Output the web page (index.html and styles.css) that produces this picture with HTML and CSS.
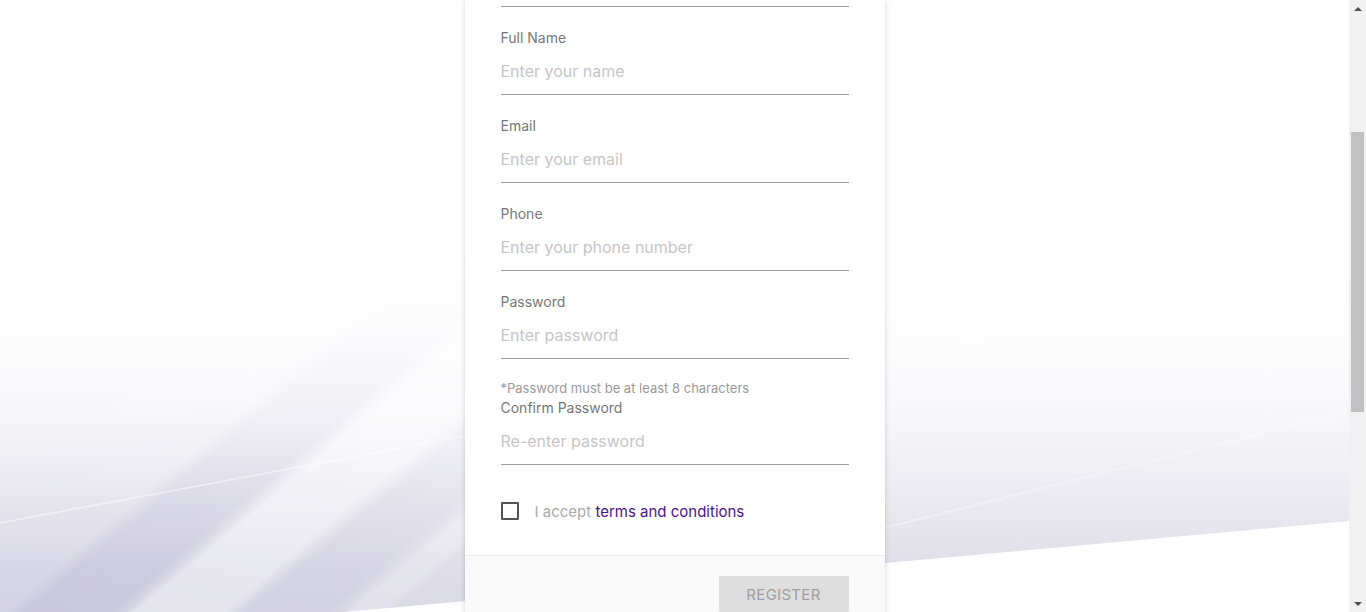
FILE: index.html
```html
<!DOCTYPE html>
<html lang="en">
<head>
<meta charset="utf-8">
<title>Register</title>
<link rel="stylesheet" href="styles.css">
</head>
<body>
<div class="screen">
  <main class="stage">
    <form class="card" action="#" onsubmit="return false">
      <div class="card-body">
        <div class="field-prev" aria-hidden="true"></div>
        <div class="field">
          <label class="field-label" for="fullname">Full Name</label>
          <input class="field-input" id="fullname" type="text" placeholder="Enter your name">
        </div>
        <div class="field">
          <label class="field-label" for="email">Email</label>
          <input class="field-input" id="email" type="email" placeholder="Enter your email">
        </div>
        <div class="field">
          <label class="field-label" for="phone">Phone</label>
          <input class="field-input" id="phone" type="tel" placeholder="Enter your phone number">
        </div>
        <div class="field">
          <label class="field-label" for="password">Password</label>
          <input class="field-input" id="password" type="password" placeholder="Enter password">
        </div>
        <p class="field-hint">*Password must be at least 8 characters</p>
        <div class="field field-after-hint">
          <label class="field-label" for="confirm">Confirm Password</label>
          <input class="field-input" id="confirm" type="password" placeholder="Re-enter password">
        </div>
        <label class="terms">
          <input class="terms-box" type="checkbox">
          <span class="terms-text">I accept <a class="terms-link" href="#">terms and conditions</a></span>
        </label>
      </div>
      <footer class="card-foot">
        <button class="btn-register" type="submit" disabled>Register</button>
      </footer>
    </form>
  </main>
  <div class="scrollbar" aria-hidden="true">
    <span class="sb-arrow sb-up"></span>
    <div class="sb-track"><span class="sb-thumb"></span></div>
    <span class="sb-arrow sb-down"></span>
  </div>
</div>
</body>
</html>
```

FILE: styles.css
```css
* { box-sizing: border-box; }

html, body { height: 100%; }

body {
  margin: 0;
  font-family: "Inter", "Liberation Sans", sans-serif;
  color: #757575;
  background: #fff;
  overflow: hidden;
}

.screen {
  display: flex;
  height: 612px;
  overflow: hidden;
}

/* page area with the wave picture behind the card */
.stage {
  flex: 1;
  display: flex;
  justify-content: center;
  align-items: flex-start;
  overflow: hidden;
  background-color: #fff;
  background-repeat: no-repeat;
  background-size: 100% 100%;
  background-image:
    /* white area under the slanted lower edge of the picture */
    linear-gradient(174.83deg, rgba(255,255,255,0) 640px, #fff 641px),
    /* thin light streaks */
    linear-gradient(169.41deg, rgba(255,255,255,0) 512.5px, rgba(255,255,255,0.55) 514px, rgba(255,255,255,0) 515.5px),
    linear-gradient(165.96deg, rgba(255,255,255,0) 725px, rgba(255,255,255,0.4) 726.5px, rgba(255,255,255,0) 728px),
    /* white fade over the top of the picture */
    linear-gradient(180deg, #fff 255px, rgba(255,255,255,0.9) 330px, rgba(255,255,255,0.6) 420px, rgba(255,255,255,0.22) 500px, rgba(255,255,255,0) 570px),
    /* diagonal bands at the lower left */
    linear-gradient(140deg,
      rgba(255,255,255,0) 470px,
      rgba(170,165,202,0.26) 486px,
      rgba(170,165,202,0.26) 540px,
      rgba(255,255,255,0) 550px,
      rgba(255,255,255,0.38) 556px,
      rgba(255,255,255,0.38) 612px,
      rgba(255,255,255,0) 622px,
      rgba(180,176,208,0.15) 628px,
      rgba(180,176,208,0.15) 678px,
      rgba(255,255,255,0) 688px,
      rgba(255,255,255,0.25) 694px,
      rgba(255,255,255,0.25) 712px,
      rgba(255,255,255,0) 720px),
    radial-gradient(ellipse 520px 240px at 0% 100%, rgba(200,197,222,0.35), rgba(200,197,222,0) 100%),
    linear-gradient(180deg, #f2f1f6 250px, #ebeaf1 420px, #e3e2eb 520px, #dcdbe7 612px);
}

.card {
  flex: none;
  width: 420px;
  background: #fff;
  box-shadow: 0 1px 5px rgba(0, 0, 0, 0.18);
}

.card-body {
  padding: 0 36px 34px;
}

.field-prev {
  height: 7px;
  border-bottom: 1px solid #9e9e9e;
  margin-bottom: 21px;
}

.field {
  display: flex;
  flex-direction: column;
  margin-bottom: 21px;
}

.field-after-hint { margin-bottom: 0; }

.field-label {
  font-size: 14px;
  line-height: 20px;
  color: #777;
}

.field-input {
  display: block;
  width: 100%;
  height: 47px;
  margin: 0;
  padding: 0;
  border: 0;
  border-bottom: 1px solid #9e9e9e;
  border-radius: 0;
  background: transparent;
  font-family: inherit;
  font-size: 16px;
  color: #444;
  outline: none;
}

.field-input::placeholder { color: #c6c6c6; }

.field-hint {
  margin: -2px 0 0;
  font-size: 13px;
  line-height: 20px;
  color: #9a9a9a;
}

.terms {
  display: flex;
  align-items: center;
  gap: 16px;
  height: 20px;
  margin-top: 36px;
  cursor: pointer;
}

.terms-box {
  appearance: none;
  -webkit-appearance: none;
  width: 18px;
  height: 18px;
  margin: 0;
  border: 2px solid #555;
  border-radius: 1px;
  background: #fff;
  flex: none;
}

.terms-text {
  font-size: 15px;
  line-height: 22px;
  padding-top: 2px;
  color: #ababab;
}

.terms-link {
  color: #4a148c;
  text-decoration: none;
}

.card-foot {
  display: flex;
  justify-content: flex-end;
  padding: 20px 36px;
  background: #fafafa;
  border-top: 1px solid #ececec;
}

.btn-register {
  width: 130px;
  height: 36px;
  border: 0;
  border-radius: 2px;
  background: #dedede;
  color: #9e9e9e;
  font-family: inherit;
  font-size: 15px;
  letter-spacing: 0.3px;
  text-transform: uppercase;
}

/* classic browser scrollbar, page scrolled part-way down */
.scrollbar {
  flex: none;
  width: 17px;
  display: flex;
  flex-direction: column;
  background: #f1f1f1;
}

.sb-arrow {
  flex: none;
  height: 17px;
  display: flex;
  align-items: center;
  justify-content: center;
}

.sb-arrow::before {
  content: "";
  display: block;
  width: 0;
  height: 0;
  border-left: 4px solid transparent;
  border-right: 4px solid transparent;
}

.sb-up::before { border-bottom: 4px solid #505050; }
.sb-down::before { border-top: 4px solid #505050; }

.sb-track {
  flex: 1;
  padding: 115px 2px 0;
}

.sb-thumb {
  display: block;
  height: 280px;
  background: #c1c1c1;
}
```
